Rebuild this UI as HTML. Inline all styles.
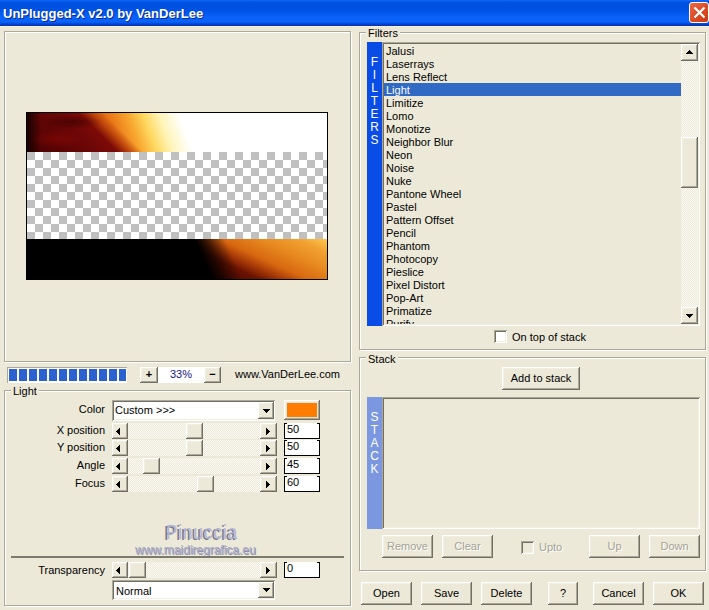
<!DOCTYPE html>
<html><head><meta charset="utf-8">
<style>
*{margin:0;padding:0;box-sizing:border-box}
html,body{width:709px;height:610px;overflow:hidden;background:#ece9d8}
body{position:relative;font:11px "Liberation Sans",sans-serif;color:#000}
.a{position:absolute}
.t{position:absolute;white-space:nowrap;line-height:13px}
.etch{position:absolute;border:1px solid #aca899;box-shadow:inset 1px 1px #fff,1px 1px #fff}
.btn{position:absolute;background:#ece9d8;box-shadow:inset -1px -1px #716f64,inset 1px 1px #fff,inset -2px -2px #aca899,inset 2px 2px #f1efe2;text-align:center}
.sunk{position:absolute;box-shadow:inset 1px 1px #aca899,inset -1px -1px #fff,inset 2px 2px #716f64,inset -2px -2px #f1efe2}
.track{position:absolute;background-color:#f4f2e8;background-image:repeating-conic-gradient(#ece9d8 0 25%,#fbfaf5 0 50%);background-size:2px 2px}
.edit{position:absolute;background:linear-gradient(#000,#000) 0 0/2px 1px no-repeat,linear-gradient(#000,#000) 100% 0/2px 1px no-repeat,#fff;border:1px solid #000;border-top:0;padding-left:2px;line-height:12px}
.tri{position:absolute;width:0;height:0}
.lab{position:absolute;white-space:nowrap;line-height:13px;text-align:right}
.gt{position:absolute;background:#ece9d8;padding:0 2px;line-height:13px;white-space:nowrap}
</style></head><body>

<!-- title bar -->
<div class="a" style="left:0;top:0;width:709px;height:26px;background:linear-gradient(#0b6cf9 0,#0a5ef0 1px,#0152e3 2px,#0050e0 6px,#0052e4 10px,#0058ec 13px,#0a62f8 17px,#0a62f8 22px,#0256e8 23px,#0046d0 24px,#0836b8 25px,#0836b8 26px)"></div><div class="a" style="left:0;top:26px;width:709px;height:1px;background:#f6f0e2"></div>
<div class="t" style="left:3px;top:6px;font-weight:bold;font-size:13px;line-height:16px;color:#0a2a90;transform:translate(1px,1px)">UnPlugged-X v2.0 by VanDerLee</div>
<div class="t" style="left:3px;top:6px;font-weight:bold;font-size:13px;line-height:16px;color:#fff">UnPlugged-X v2.0 by VanDerLee</div>
<div class="a" style="left:689px;top:2px;width:20px;height:21px;border:1px solid #fff;border-radius:3px;background:linear-gradient(135deg,#e86a48,#dc4a22 55%,#c83c16)"></div>
<svg class="a" style="left:689px;top:2px" width="21" height="21"><path d="M5.5 5.5L15.5 15.5M15.5 5.5L5.5 15.5" stroke="#fff" stroke-width="2.2"/></svg>

<!-- preview panel -->
<div class="etch" style="left:4px;top:31px;width:347px;height:331px"></div>
<div class="a" style="left:26px;top:112px;width:302px;height:168px;background:#000;border:1px solid #000;overflow:hidden">
  <div class="a" style="left:0;top:0;width:300px;height:39px;background:radial-gradient(ellipse 28px 9px at 30px 26px,rgba(150,10,6,.45),rgba(150,10,6,0)),radial-gradient(ellipse 30px 7px at 45px 9px,rgba(30,0,0,.45),rgba(30,0,0,0)),linear-gradient(90deg,rgba(10,0,0,.8) 0,rgba(10,0,0,0) 14px),linear-gradient(45deg,#4a0202 0,#5a0404 25px,#6c0606 48px,#7c0a06 64px,rgba(180,55,8,.7) 74px,rgba(200,90,16,0) 82px),linear-gradient(70deg,#8a2008 0,#c04a0c 60px,#e87818 90px,#f8a830 108px,#ffd860 122px,#fff4b8 137px,#fff 156px)"></div>
  <div class="a" style="left:0;top:39px;width:300px;height:87px;background-color:#fff;background-image:repeating-conic-gradient(#fff 0 25%,#c0c0c0 0 50%);background-size:16px 16px"></div>
  <div class="a" style="left:0;top:126px;width:300px;height:40px;background:linear-gradient(67deg,#000 0,#000 170px,rgba(0,0,0,.6) 182px,rgba(0,0,0,0) 198px),linear-gradient(25deg,#2a0400 0,#4a0800 80px,#6a1200 98px,#a83a08 108px,#d86810 118px,#e88a20 135px,#f0a030 150px,#ffc850 163px)"></div>
</div>

<!-- progress -->
<div class="a" style="left:7px;top:367px;width:120px;height:16px;box-shadow:inset 1px 1px #aca899,inset -1px -1px #fff"></div>
<div class="a" style="left:8px;top:368px;width:118px;height:14px;background:#fff"></div><div class="a" style="left:9px;top:369px;width:117px;height:12px;background:repeating-linear-gradient(90deg,#2b62d0 0 8px,#fcfbf6 8px 10px)"></div>

<div class="btn" style="left:140px;top:367px;width:18px;height:16px;font-weight:bold;line-height:15px">+</div>
<div class="a" style="left:158px;top:367px;width:46px;height:16px;background:#fff"></div>
<div class="t" style="left:158px;top:367px;width:46px;text-align:center;color:#14148a;line-height:14px">33%</div>
<div class="btn" style="left:204px;top:367px;width:17px;height:16px;font-weight:bold;line-height:15px">&minus;</div>
<div class="t" style="left:235px;top:368px">www.VanDerLee.com</div>

<!-- Light group -->
<div class="etch" style="left:4px;top:390px;width:347px;height:216px"></div>
<div class="gt" style="left:11px;top:385px">Light</div>

<div class="lab" style="left:0;top:403px;width:105px">Color</div>
<div class="sunk" style="left:112px;top:400px;width:163px;height:21px;background:#fff"></div>
<div class="t" style="left:115px;top:404px">Custom &gt;&gt;&gt;</div>
<div class="btn" style="left:258px;top:402px;width:16px;height:17px"></div>
<svg class="a" style="left:263px;top:409px" width="7" height="4"><path d="M0 0h7v1h-7zM1 1h5v1h-5zM2 2h3v1h-3zM3 3h1v1h-1z" fill="#000"/></svg>
<div class="btn" style="left:284px;top:400px;width:36px;height:20px"></div>
<div class="a" style="left:287px;top:403px;width:30px;height:14px;background:#ff7c00"></div>

<!-- slider rows -->
<div class="lab" style="left:0;top:424px;width:105px">X position</div>
<div class="track" style="left:112px;top:423px;width:165px;height:16px"></div>
<div class="btn" style="left:112px;top:423px;width:16px;height:16px"></div>
<svg class="a" style="left:116px;top:428px" width="4" height="7"><path d="M0 3h1v1h-1zM1 2h1v3h-1zM2 1h1v5h-1zM3 0h1v7h-1z" fill="#000"/></svg>
<div class="btn" style="left:186px;top:423px;width:17px;height:16px"></div>
<div class="btn" style="left:260px;top:423px;width:17px;height:16px"></div>
<svg class="a" style="left:266px;top:428px" width="4" height="7"><path d="M0 0h1v7h-1zM1 1h1v5h-1zM2 2h1v3h-1zM3 3h1v1h-1z" fill="#000"/></svg>
<div class="edit" style="left:284px;top:423px;width:36px;height:16px">50</div>
<div class="lab" style="left:0;top:441px;width:105px">Y position</div>
<div class="track" style="left:112px;top:440px;width:165px;height:16px"></div>
<div class="btn" style="left:112px;top:440px;width:16px;height:16px"></div>
<svg class="a" style="left:116px;top:445px" width="4" height="7"><path d="M0 3h1v1h-1zM1 2h1v3h-1zM2 1h1v5h-1zM3 0h1v7h-1z" fill="#000"/></svg>
<div class="btn" style="left:186px;top:440px;width:17px;height:16px"></div>
<div class="btn" style="left:260px;top:440px;width:17px;height:16px"></div>
<svg class="a" style="left:266px;top:445px" width="4" height="7"><path d="M0 0h1v7h-1zM1 1h1v5h-1zM2 2h1v3h-1zM3 3h1v1h-1z" fill="#000"/></svg>
<div class="edit" style="left:284px;top:440px;width:36px;height:16px">50</div>
<div class="lab" style="left:0;top:459px;width:105px">Angle</div>
<div class="track" style="left:112px;top:458px;width:165px;height:16px"></div>
<div class="btn" style="left:112px;top:458px;width:16px;height:16px"></div>
<svg class="a" style="left:116px;top:463px" width="4" height="7"><path d="M0 3h1v1h-1zM1 2h1v3h-1zM2 1h1v5h-1zM3 0h1v7h-1z" fill="#000"/></svg>
<div class="btn" style="left:143px;top:458px;width:17px;height:16px"></div>
<div class="btn" style="left:260px;top:458px;width:17px;height:16px"></div>
<svg class="a" style="left:266px;top:463px" width="4" height="7"><path d="M0 0h1v7h-1zM1 1h1v5h-1zM2 2h1v3h-1zM3 3h1v1h-1z" fill="#000"/></svg>
<div class="edit" style="left:284px;top:458px;width:36px;height:16px">45</div>
<div class="lab" style="left:0;top:477px;width:105px">Focus</div>
<div class="track" style="left:112px;top:476px;width:165px;height:16px"></div>
<div class="btn" style="left:112px;top:476px;width:16px;height:16px"></div>
<svg class="a" style="left:116px;top:481px" width="4" height="7"><path d="M0 3h1v1h-1zM1 2h1v3h-1zM2 1h1v5h-1zM3 0h1v7h-1z" fill="#000"/></svg>
<div class="btn" style="left:197px;top:476px;width:17px;height:16px"></div>
<div class="btn" style="left:260px;top:476px;width:17px;height:16px"></div>
<svg class="a" style="left:266px;top:481px" width="4" height="7"><path d="M0 0h1v7h-1zM1 1h1v5h-1zM2 2h1v3h-1zM3 3h1v1h-1z" fill="#000"/></svg>
<div class="edit" style="left:284px;top:476px;width:36px;height:16px">60</div>


<div class="t" style="left:165px;top:521px;font-size:17px;line-height:20px;letter-spacing:1px;color:#77778a;transform:translate(-1px,1px) scaleY(1.2);transform-origin:0 0">Pinuccia</div>
<div class="t" style="left:166px;top:521px;font-size:17px;line-height:20px;letter-spacing:1px;color:#b4b4d6;transform:scaleY(1.2);transform-origin:0 0">Pinuccia</div>
<div class="t" style="left:135px;top:543px;font-size:12px;line-height:14px;color:#9090a8;transform:translate(1px,1px)">www.maidiregrafica.eu</div>
<div class="t" style="left:135px;top:543px;font-size:12px;line-height:14px;color:#a8a8c8">www.maidiregrafica.eu</div>
<div class="a" style="left:11px;top:556px;width:333px;height:2px;background:#7c7a6c"></div>

<div class="lab" style="left:0;top:564px;width:105px">Transparency</div>
<div class="track" style="left:112px;top:562px;width:165px;height:16px"></div>
<div class="btn" style="left:112px;top:562px;width:16px;height:16px"></div>
<svg class="a" style="left:116px;top:567px" width="4" height="7"><path d="M0 3h1v1h-1zM1 2h1v3h-1zM2 1h1v5h-1zM3 0h1v7h-1z" fill="#000"/></svg>
<div class="btn" style="left:129px;top:562px;width:17px;height:16px"></div>
<div class="btn" style="left:260px;top:562px;width:17px;height:16px"></div>
<svg class="a" style="left:266px;top:567px" width="4" height="7"><path d="M0 0h1v7h-1zM1 1h1v5h-1zM2 2h1v3h-1zM3 3h1v1h-1z" fill="#000"/></svg>
<div class="edit" style="left:284px;top:562px;width:36px;height:16px">0</div>

<div class="sunk" style="left:112px;top:580px;width:163px;height:20px;background:#fff"></div>
<div class="t" style="left:116px;top:585px">Normal</div>
<div class="btn" style="left:258px;top:582px;width:16px;height:16px"></div>
<svg class="a" style="left:263px;top:588px" width="7" height="4"><path d="M0 0h7v1h-7zM1 1h5v1h-5zM2 2h3v1h-3zM3 3h1v1h-1z" fill="#000"/></svg>

<!-- Filters group -->
<div class="etch" style="left:359px;top:32px;width:347px;height:318px"></div>
<div class="gt" style="left:366px;top:27px">Filters</div>
<div class="a" style="left:367px;top:42px;width:15px;height:284px;background:#0a4ce6"></div>
<div class="a" style="left:367px;top:56px;width:15px;color:#fff;text-align:center;line-height:13px;font-size:12px">F<br>I<br>L<br>T<br>E<br>R<br>S</div>
<div class="sunk" style="left:382px;top:42px;width:318px;height:284px;overflow:hidden">
</div>
<div class="a" style="left:384px;top:44px;width:297px;height:280px;overflow:hidden">
<div class="t" style="left:2px;top:1px">Jalusi</div>
<div class="t" style="left:2px;top:14px">Laserrays</div>
<div class="t" style="left:2px;top:27px">Lens Reflect</div>
<div class="a" style="left:0;top:39px;width:297px;height:13px;background:#316ac5"></div><div class="t" style="left:2px;top:40px;color:#fff">Light</div>
<div class="t" style="left:2px;top:53px">Limitize</div>
<div class="t" style="left:2px;top:66px">Lomo</div>
<div class="t" style="left:2px;top:79px">Monotize</div>
<div class="t" style="left:2px;top:92px">Neighbor Blur</div>
<div class="t" style="left:2px;top:105px">Neon</div>
<div class="t" style="left:2px;top:118px">Noise</div>
<div class="t" style="left:2px;top:131px">Nuke</div>
<div class="t" style="left:2px;top:144px">Pantone Wheel</div>
<div class="t" style="left:2px;top:157px">Pastel</div>
<div class="t" style="left:2px;top:170px">Pattern Offset</div>
<div class="t" style="left:2px;top:183px">Pencil</div>
<div class="t" style="left:2px;top:196px">Phantom</div>
<div class="t" style="left:2px;top:209px">Photocopy</div>
<div class="t" style="left:2px;top:222px">Pieslice</div>
<div class="t" style="left:2px;top:235px">Pixel Distort</div>
<div class="t" style="left:2px;top:248px">Pop-Art</div>
<div class="t" style="left:2px;top:261px">Primatize</div>
<div class="t" style="left:2px;top:274px">Purify</div>
</div>
<div class="track" style="left:681px;top:44px;width:17px;height:280px"></div>
<div class="btn" style="left:681px;top:44px;width:17px;height:17px"></div>
<svg class="a" style="left:686px;top:50px" width="7" height="4"><path d="M3 0h1v1h-1zM2 1h3v1h-3zM1 2h5v1h-5zM0 3h7v1h-7z" fill="#000"/></svg>
<div class="btn" style="left:681px;top:137px;width:17px;height:51px"></div>
<div class="btn" style="left:681px;top:307px;width:17px;height:17px"></div>
<svg class="a" style="left:686px;top:314px" width="7" height="4"><path d="M0 0h7v1h-7zM1 1h5v1h-5zM2 2h3v1h-3zM3 3h1v1h-1z" fill="#000"/></svg>

<div class="sunk" style="left:494px;top:330px;width:13px;height:13px;background:#fff"></div>
<div class="t" style="left:512px;top:331px">On top of stack</div>

<!-- Stack group -->
<div class="etch" style="left:359px;top:357px;width:347px;height:214px"></div>
<div class="gt" style="left:366px;top:353px">Stack</div>
<div class="btn" style="left:502px;top:367px;width:78px;height:23px;line-height:22px">Add to stack</div>
<div class="a" style="left:367px;top:397px;width:15px;height:132px;background:#7b97e0"></div>
<div class="a" style="left:367px;top:411px;width:15px;color:#fff;text-align:center;line-height:13px;font-size:12px">S<br>T<br>A<br>C<br>K</div>
<div class="sunk" style="left:382px;top:397px;width:318px;height:132px"></div>

<div class="btn" style="left:382px;top:535px;width:51px;height:23px;line-height:22px;color:#a4a194;text-shadow:1px 1px #fff">Remove</div>
<div class="btn" style="left:442px;top:535px;width:51px;height:23px;line-height:22px;color:#a4a194;text-shadow:1px 1px #fff">Clear</div>
<div class="sunk" style="left:521px;top:541px;width:13px;height:13px"></div>
<div class="t" style="left:539px;top:541px;color:#a4a194;text-shadow:1px 1px #fff">Upto</div>
<div class="btn" style="left:589px;top:535px;width:51px;height:23px;line-height:22px;color:#a4a194;text-shadow:1px 1px #fff">Up</div>
<div class="btn" style="left:649px;top:535px;width:51px;height:23px;line-height:22px;color:#a4a194;text-shadow:1px 1px #fff">Down</div>

<div class="btn" style="left:361px;top:582px;width:51px;height:23px;line-height:22px">Open</div>
<div class="btn" style="left:421px;top:582px;width:51px;height:23px;line-height:22px">Save</div>
<div class="btn" style="left:481px;top:582px;width:51px;height:23px;line-height:22px">Delete</div>
<div class="btn" style="left:548px;top:582px;width:30px;height:23px;line-height:22px">?</div>
<div class="btn" style="left:593px;top:582px;width:51px;height:23px;line-height:22px">Cancel</div>
<div class="btn" style="left:653px;top:582px;width:51px;height:23px;line-height:22px">OK</div>

</body></html>
